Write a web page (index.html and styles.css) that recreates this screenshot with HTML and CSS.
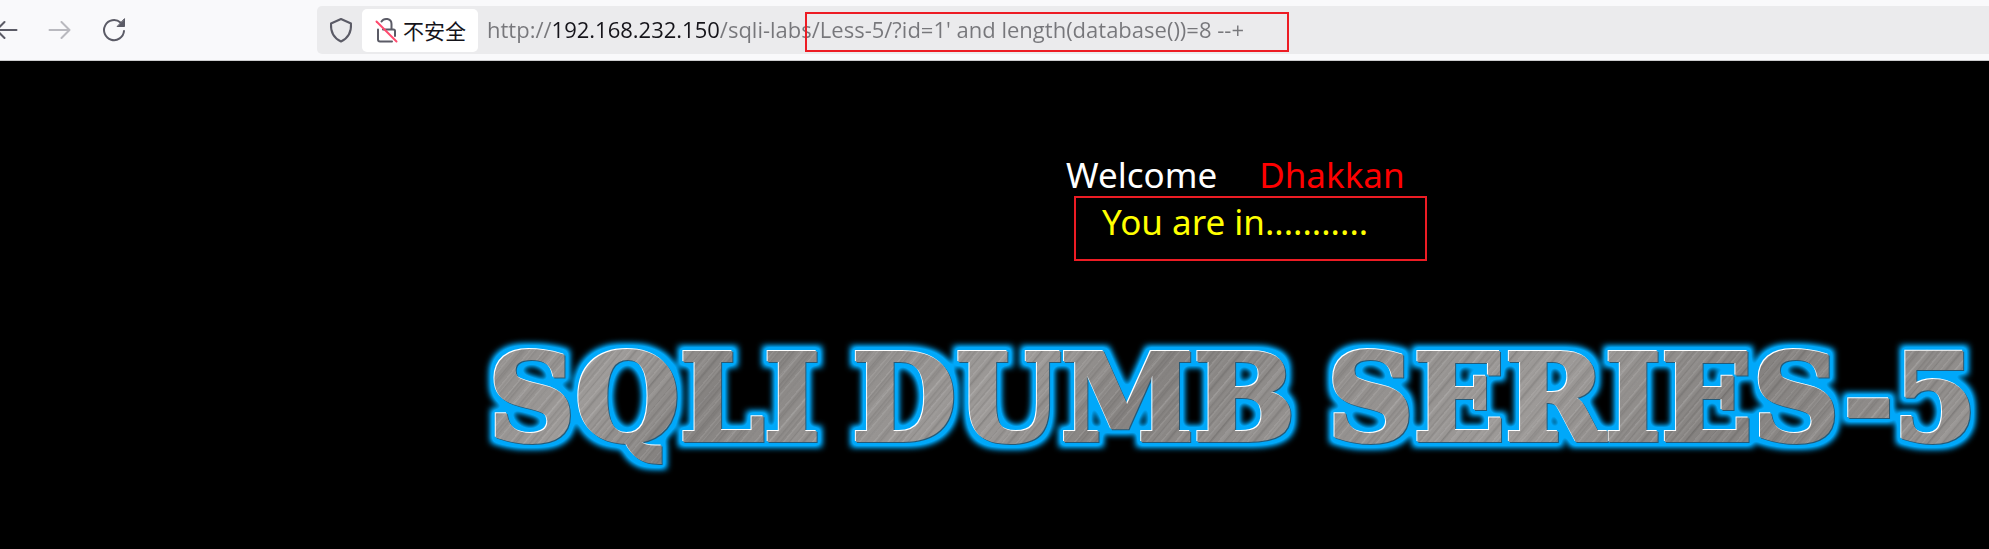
FILE: index.html
```html
<!DOCTYPE html>
<html lang="zh-CN">
<head>
<meta charset="utf-8">
<title>Less-5</title>
<link rel="stylesheet" href="styles.css">
</head>
<body>
<header class="toolbar">
  <nav class="nav">
    <button class="nav-button" type="button" aria-label="Back">
      <svg width="24" height="24" viewBox="0 0 24 24"><path d="M22.500 12H2M10.500 4L2.500 12l8 8"/></svg>
    </button>
    <button class="nav-button" type="button" aria-label="Forward" disabled>
      <svg width="24" height="24" viewBox="0 0 24 24"><path d="M1.500 12H21M13.500 4l8 8-8 8"/></svg>
    </button>
    <button class="nav-button" type="button" aria-label="Reload">
      <svg width="24" height="24" viewBox="0 0 24 24"><path d="M22 13A10 10 0 1 1 18.500 4.500"/><path class="solid" d="M22.500 1v7.500h-7z"/></svg>
    </button>
  </nav>
  <div class="address">
    <button class="shield" type="button" aria-label="Protection">
      <svg width="24" height="26" viewBox="0 0 24 26"><path d="M12 2L22 6.500C22.500 15 19.500 21 12 24.500C4.500 21 1.500 15 2 6.500Z"/></svg>
    </button>
    <button class="security" type="button">
      <svg width="24" height="26" viewBox="0 0 24 26"><path d="M6.500 4.500C9 .500 16.500 1 16.500 7v4.500M8 12.500h10.500q1.500 0 1.500 1.500v5M3 12.500v10q0 2 2 2h12"/><path class="slash" d="M1.500 4.500l20 20"/></svg>
      <span>不安全</span>
    </button>
    <div class="url-wrap">
      <input class="url" type="text" aria-label="URL" spellcheck="false" value="http://192.168.232.150/sqli-labs/Less-5/?id=1' and length(database())=8 --+">
      <span class="mark url-mark"></span>
    </div>
  </div>
</header>
<main class="page">
  <section class="message">
    <p class="line"><span>Welcome</span><span class="name">Dhakkan</span></p>
    <p class="status">You are in...........</p>
    <span class="mark status-mark"></span>
  </section>
  <svg class="defs" width="0" height="0" aria-hidden="true">
    <filter id="glow" x="-5%" y="-30%" width="110%" height="160%" color-interpolation-filters="sRGB">
      <feMorphology in="SourceAlpha" operator="dilate" radius="5" result="fat"/>
      <feGaussianBlur in="fat" stdDeviation="3" result="soft"/>
      <feComponentTransfer in="soft" result="halo"><feFuncA type="linear" slope="1.500"/></feComponentTransfer>
      <feFlood flood-color="#00a8fa"/>
      <feComposite in2="halo" operator="in" result="blue"/>
      <feOffset in="SourceAlpha" dx="1" dy="1" result="low"/>
      <feFlood flood-color="#245a78"/>
      <feComposite in2="low" operator="in" result="shade"/>
      <feOffset in="SourceAlpha" dx="-1" dy="-1" result="high"/>
      <feFlood flood-color="#ffffff"/>
      <feComposite in2="high" operator="in" result="light"/>
      <feMerge><feMergeNode in="blue"/><feMergeNode in="shade"/><feMergeNode in="light"/><feMergeNode in="SourceGraphic"/></feMerge>
    </filter>
  </svg>
  <h1 class="title"><span>SQLI</span> <span>DUMB</span> <span>SERIES-5</span></h1>
</main>
</body>
</html>
```
FILE: styles.css
```css
* { box-sizing: border-box; }
body {
  margin: 0;
  background: #000;
  font-family: "Noto Sans", "Noto Sans CJK SC", sans-serif;
  overflow: hidden;
}
button { border: 0; padding: 0; background: none; font: inherit; }
svg { fill: none; stroke: #5b5b66; stroke-width: 2; stroke-linecap: round; stroke-linejoin: round; }
.toolbar {
  display: flex;
  align-items: center;
  height: 61px;
  background: #f9f9fb;
  border-bottom: 1px solid #ccccce;
}
.nav { display: flex; gap: 30px; width: 317px; margin-left: -6px; flex: none; }
.nav-button { width: 24px; height: 24px; }
.nav-button:disabled { opacity: .4; }
.nav-button svg { display: block; }
.solid { fill: #5b5b66; stroke-width: 1; }
.address {
  flex: 1;
  display: flex;
  align-items: center;
  height: 48px;
  margin-left: 6px;
  padding-left: 12px;
  border-radius: 5px 0 0 5px;
  background: #ebebed;
}
.shield { width: 24px; height: 26px; margin-right: 9px; }
.shield svg { display: block; }
.security {
  display: flex;
  align-items: center;
  gap: 4px;
  width: 116px;
  height: 43px;
  padding-left: 13px;
  border-radius: 5px;
  background: #fff;
  color: #15141a;
  font-family: "Noto Sans CJK SC", sans-serif;
  font-size: 21px;
  white-space: nowrap;
}
.slash { stroke: #ff4a6e; }
.url-wrap { position: relative; flex: 1; margin-left: 9px; }
.url {
  display: block;
  width: 100%;
  height: 40px;
  border: 0;
  padding: 0 0 2px;
  outline: 0;
  font-family: "Open Sans", sans-serif;
  font-size: 22px;
  color: transparent;
  background: linear-gradient(90deg, #77777b 65px, #15141a 65px 232px, #77777b 232px);
  -webkit-background-clip: text;
  background-clip: text;
}
.mark { position: absolute; border: 2px solid #ed1c24; pointer-events: none; }
.url-mark { left: 318px; top: 2px; width: 484px; height: 40px; }
.page { display: flex; flex-direction: column; align-items: flex-end; padding-top: 90px; }
.message {
  position: relative;
  width: 46.4%;
  color: #fff;
  font-size: 35px;
  line-height: 47px;
}
.message p { margin: 0; white-space: nowrap; }
.line { display: flex; gap: 42px; }
.name { color: #f00; }
.status { padding-left: 36px; color: #ff0; }
.status-mark { left: 8px; top: 45px; width: 353px; height: 65px; }
.defs { position: absolute; }
.title {
  display: flex;
  gap: 32px;
  margin: 85px 12px 0 0;
  font-family: "DejaVu Serif", serif;
  font-size: 120px;
  font-weight: 700;
  line-height: 136px;
  filter: url(#glow);
  white-space: nowrap;
}
.title span {
  padding-bottom: 12px;
  color: transparent;
  -webkit-text-stroke: 4px transparent;
  background:
    repeating-linear-gradient(130deg, #ffffff18 0 1px, #ffffff00 2px 4px, #00000014 5px, #ffffff00 7px 11px),
    repeating-linear-gradient(130deg, #ffffff00 0 5px, #00000010 6px, #ffffff00 8px 13px, #ffffff14 14px, #ffffff00 17px),
    linear-gradient(130deg, #8f8c8a, #9d9a98 35%, #858280 60%, #989593);
  -webkit-background-clip: text;
  background-clip: text;
}
```
